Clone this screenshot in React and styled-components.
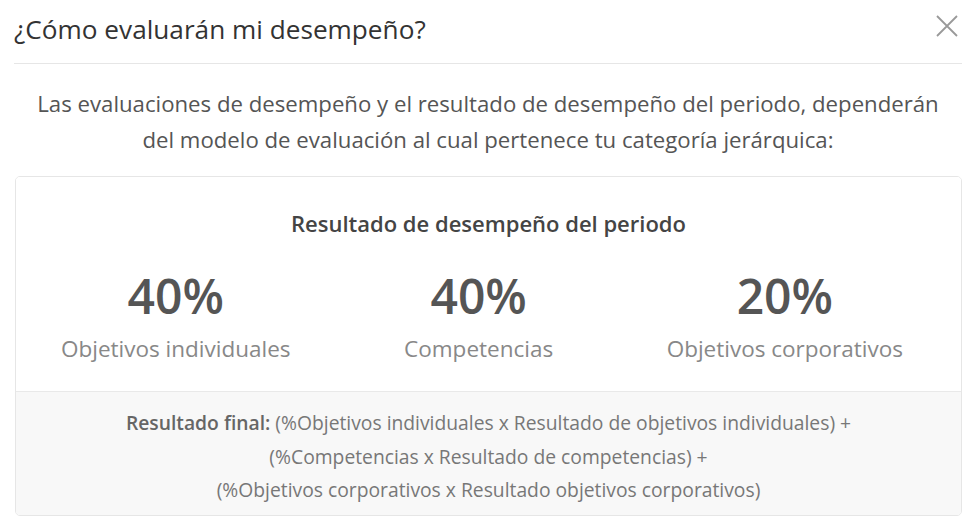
import React from 'react';
import styled, { createGlobalStyle } from 'styled-components';

const GlobalStyle = createGlobalStyle`
  body {
    margin: 0;
    background: #ffffff;
    font-family: "Open Sans", "Noto Sans", Arial, sans-serif;
  }
`;

const Modal = styled.div`
  width: 974px;
  height: 518px;
  box-sizing: border-box;
  padding: 0 12px 0 14px;
  background: #fff;
  overflow: hidden;
`;

const Header = styled.div`
  display: flex;
  align-items: flex-start;
  justify-content: space-between;
  box-sizing: border-box;
  height: 64px;
  padding-top: 11px;
  border-bottom: 1px solid #e6e6e6;
`;

const Title = styled.h2`
  margin: 0;
  font-size: 26.2px;
  line-height: 36px;
  font-weight: 400;
  color: #333;
`;

const CloseButton = styled.button`
  display: flex;
  align-items: center;
  justify-content: center;
  width: 30px;
  height: 30px;
  padding: 0;
  border: none;
  background: transparent;
  cursor: pointer;
`;

const Intro = styled.p`
  margin: 22px 0 18px;
  text-align: center;
  font-size: 22.2px;
  line-height: 36px;
  color: #555;
`;

const Card = styled.div`
  margin-left: 1px;
  border: 1px solid #e6e6e6;
  border-radius: 5px;
  overflow: hidden;
`;

const CardBody = styled.div`
  padding: 31px 0 27px;
  background: #fff;
`;

const CardTitle = styled.h3`
  margin: 0 0 28px;
  text-align: center;
  font-size: 22px;
  line-height: 30px;
  font-weight: 600;
  color: #444;
`;

const Stats = styled.div`
  display: flex;
  justify-content: space-between;
  padding: 0 58px 0 45px;
`;

const Stat = styled.div`
  display: flex;
  flex-direction: column;
  align-items: center;
`;

const Value = styled.div`
  font-size: 48px;
  font-weight: 600;
  line-height: 60px;
  color: #555;
`;

const Label = styled.div`
  margin-top: 8px;
  font-size: 22.5px;
  line-height: 30px;
  color: #888;
`;

const Footer = styled.div`
  padding: 14px 0 8px;
  background: #f8f8f8;
  border-top: 1px solid #e9e9e9;
  text-align: center;
  font-size: 19.3px;
  line-height: 33.5px;
  color: #777;
`;

const Strong = styled.strong`
  font-weight: 600;
  color: #666;
`;

const stats = [
  { value: '40%', label: 'Objetivos individuales' },
  { value: '40%', label: 'Competencias' },
  { value: '20%', label: 'Objetivos corporativos' },
];

export default function App() {
  return (
    <>
      <GlobalStyle />
      <Modal>
        <Header>
          <Title>¿Cómo evaluarán mi desempeño?</Title>
          <CloseButton aria-label="Cerrar">
            <svg width="22" height="22" viewBox="0 0 22 22">
              <path d="M1 1L21 21M21 1L1 21" stroke="#999" strokeWidth="1.8" fill="none" />
            </svg>
          </CloseButton>
        </Header>
        <Intro>
          Las evaluaciones de desempeño y el resultado de desempeño del periodo, dependerán
          <br />
          del modelo de evaluación al cual pertenece tu categoría jerárquica:
        </Intro>
        <Card>
          <CardBody>
            <CardTitle>Resultado de desempeño del periodo</CardTitle>
            <Stats>
              {stats.map((s, i) => (
                <Stat key={i}>
                  <Value>{s.value}</Value>
                  <Label>{s.label}</Label>
                </Stat>
              ))}
            </Stats>
          </CardBody>
          <Footer>
            <Strong>Resultado final:</Strong> (%Objetivos individuales x Resultado de objetivos individuales) +
            <br />
            (%Competencias x Resultado de competencias) +
            <br />
            (%Objetivos corporativos x Resultado objetivos corporativos)
          </Footer>
        </Card>
      </Modal>
    </>
  );
}
